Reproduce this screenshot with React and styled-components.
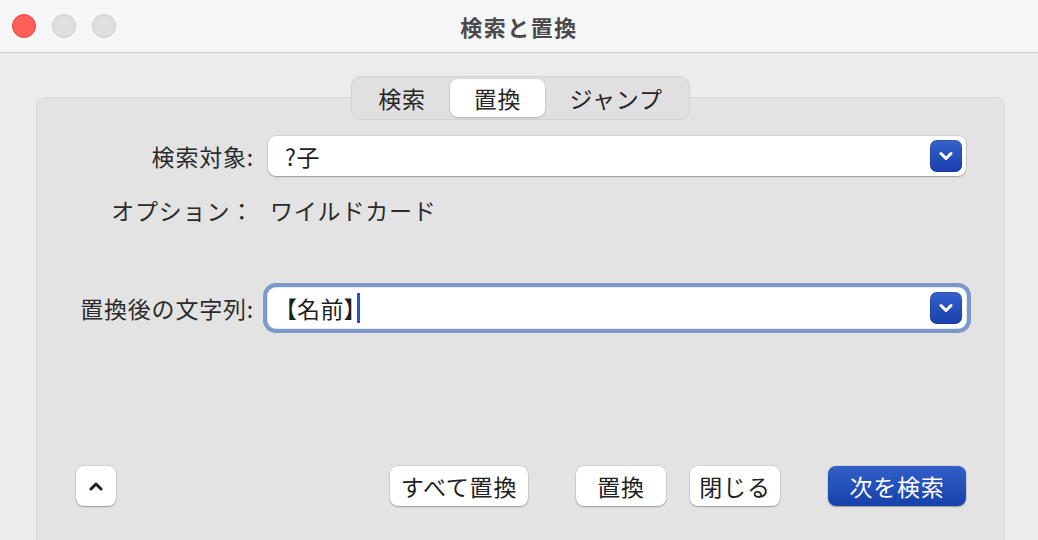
import React from 'react';
import styled, { createGlobalStyle } from 'styled-components';

const GlobalStyle = createGlobalStyle`
  html, body {
    margin: 0;
    padding: 0;
    background: #ececec;
  }
  body {
    font-family: 'Noto Sans CJK JP', 'Noto Sans', sans-serif;
  }
`;

const tabs = ['検索', '置換', 'ジャンプ'];

const Chevron = ({ up }) => (
  <svg width="14" height="10" viewBox="0 0 14 10">
    <path
      d={up ? 'M2 8 L7 3 L12 8' : 'M2 2.5 L7 7.5 L12 2.5'}
      fill="none"
      stroke="currentColor"
      strokeWidth="3"
      strokeLinecap="round"
      strokeLinejoin="round"
    />
  </svg>
);

export default function App() {
  return (
    <Window>
      <GlobalStyle />
      <TitleBar>
        <Lights>
          <Light $color="#fe5f57" $border="#e2463f" />
          <Light $color="#dedede" $border="#c9c9c9" />
          <Light $color="#dedede" $border="#c9c9c9" />
        </Lights>
        <Title>検索と置換</Title>
        <div />
      </TitleBar>

      <Body>
        <Tabs>
          {tabs.map((t) => (
            <Tab key={t} $active={t === '置換'}>
              {t}
            </Tab>
          ))}
        </Tabs>

        <Panel>
          <Row $top={0}>
            <Label>検索対象:</Label>
            <Field>
              <Value>?子</Value>
              <DropButton>
                <Chevron />
              </DropButton>
            </Field>
          </Row>

          <Row $top={20}>
            <Label>オプション：</Label>
            <Plain>ワイルドカード</Plain>
          </Row>

          <Row $top={64}>
            <Label>置換後の文字列:</Label>
            <Field $focused>
              <Value>【名前】</Value>
              <Caret />
              <DropButton>
                <Chevron />
              </DropButton>
            </Field>
          </Row>

          <Footer>
            <Button $width={40}>
              <Chevron up />
            </Button>
            <Button $width={138} $gap="auto">すべて置換</Button>
            <Button $width={90} $gap="48px">置換</Button>
            <Button $width={90} $gap="24px">閉じる</Button>
            <Button $width={138} $gap="48px" $primary>
              次を検索
            </Button>
          </Footer>
        </Panel>
      </Body>
    </Window>
  );
}

const Window = styled.div`
  width: 1038px;
  height: 540px;
  overflow: hidden;
  display: flex;
  flex-direction: column;
`;

const TitleBar = styled.div`
  height: 53px;
  box-sizing: border-box;
  flex: none;
  background: #f6f6f6;
  border-bottom: 1px solid #cdcdcd;
  display: grid;
  grid-template-columns: 1fr auto 1fr;
  align-items: center;
`;

const Lights = styled.div`
  display: flex;
  gap: 16px;
  padding-left: 12px;
`;

const Light = styled.span`
  width: 24px;
  height: 24px;
  box-sizing: border-box;
  border-radius: 50%;
  background: ${(p) => p.$color};
  border: 1px solid ${(p) => p.$border};
`;

const Title = styled.div`
  font-size: 22px;
  font-weight: 700;
  color: #4a4a4a;
  letter-spacing: 1.5px;
`;

const Body = styled.div`
  flex: 1;
  display: flex;
  flex-direction: column;
  padding: 23px 33px 0 36px;
`;

const Tabs = styled.div`
  align-self: center;
  position: relative;
  z-index: 1;
  display: flex;
  height: 44px;
  box-sizing: border-box;
  padding: 2px;
  margin-bottom: -23px;
  background: #e0e0e0;
  border: 1px solid #d3d3d3;
  border-radius: 10px;
`;

const Tab = styled.div`
  display: flex;
  align-items: center;
  padding: 0 24px;
  font-size: 23px;
  letter-spacing: 0.8px;
  color: #262626;
  border-radius: 8px;
  background: ${(p) => (p.$active ? '#ffffff' : 'transparent')};
  box-shadow: ${(p) =>
    p.$active ? '0 1px 2px rgba(0,0,0,0.18), 0 0 0 0.5px rgba(0,0,0,0.08)' : 'none'};
`;

const Panel = styled.div`
  flex: 1;
  background: #e3e3e3;
  border: 1px solid #d6d6d6;
  border-bottom: none;
  border-radius: 9px 9px 0 0;
  padding: 38px 38px 0 35px;
`;

const Row = styled.div`
  display: grid;
  grid-template-columns: 182px 1fr;
  column-gap: 14px;
  align-items: center;
  margin-top: ${(p) => p.$top}px;
`;

const Label = styled.div`
  text-align: right;
  font-size: 23px;
  letter-spacing: 0.8px;
  line-height: 28px;
  color: #2b2b2b;
  white-space: nowrap;
`;

const Plain = styled.div`
  font-size: 23px;
  letter-spacing: 0.8px;
  line-height: 28px;
  color: #2b2b2b;
  padding-left: 2px;
`;

const Field = styled.div`
  height: 40px;
  box-sizing: border-box;
  display: flex;
  align-items: center;
  padding: 0 4px 0 17px;
  background: #ffffff;
  border-radius: 8px;
  box-shadow: ${(p) =>
    p.$focused
      ? '0 0 0 1px #e4eaf5, 0 0 0 5px #7b97cc'
      : '0 0 0 0.5px rgba(0,0,0,0.14), 0 1px 1.5px rgba(0,0,0,0.28)'};
`;

const Value = styled.span`
  font-size: 23px;
  letter-spacing: 0.5px;
  color: #1e1e1e;
  font-feature-settings: 'palt';
`;

const Caret = styled.span`
  width: 3px;
  height: 30px;
  margin-left: 1px;
  background: #2353d2;
`;

const DropButton = styled.div`
  margin-left: auto;
  width: 32px;
  height: 32px;
  border-radius: 7px;
  display: flex;
  align-items: center;
  justify-content: center;
  color: #ffffff;
  background: linear-gradient(#3462cb, #1a3fae);
  box-shadow: inset 0 0 0 0.5px rgba(0, 0, 0, 0.2);
`;

const Footer = styled.div`
  display: flex;
  align-items: center;
  margin-top: 138px;
  padding-left: 4px;
`;

const Button = styled.div`
  width: ${(p) => p.$width}px;
  height: 40px;
  margin-left: ${(p) => p.$gap || '0'};
  display: flex;
  align-items: center;
  justify-content: center;
  border-radius: 8px;
  font-size: 23px;
  letter-spacing: 0.8px;
  color: ${(p) => (p.$primary ? '#ffffff' : '#222222')};
  background: ${(p) => (p.$primary ? 'linear-gradient(#3160c8, #1741aa)' : '#ffffff')};
  box-shadow: 0 0 0 0.5px rgba(0, 0, 0, 0.12), 0 1px 1.5px rgba(0, 0, 0, 0.28);
`;
